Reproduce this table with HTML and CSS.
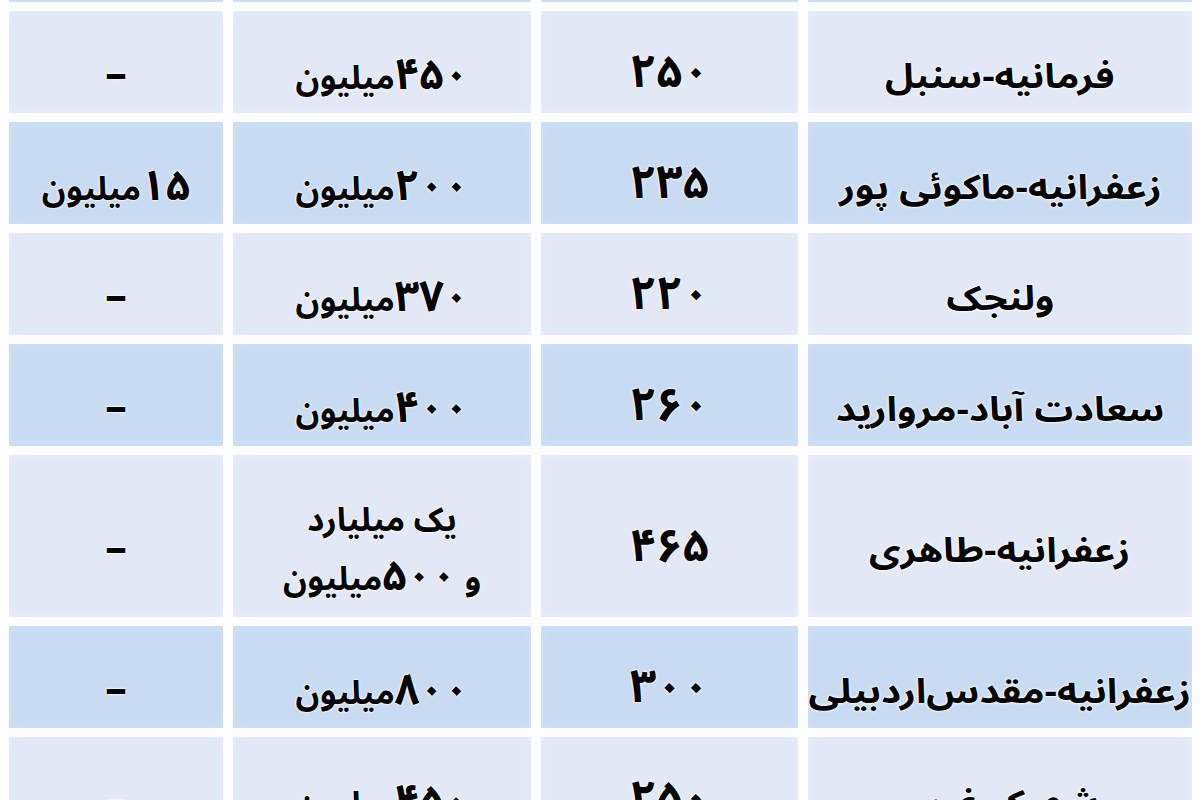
FILE: index.html
```html
<!DOCTYPE html>
<html lang="fa" dir="rtl">
<head>
<meta charset="utf-8">
<title>جدول قیمت</title>
<link rel="stylesheet" href="styles.css">
</head>
<body>
<div class="table">
  <div class="cell dark"></div><div class="cell dark"></div><div class="cell dark"></div><div class="cell dark"></div>

  <div class="cell light name"><span class="t">فرمانیه-سنبل</span></div>
  <div class="cell light num">۲۵۰</div>
  <div class="cell light"><span><span class="d">۴۵۰</span>میلیون</span></div>
  <div class="cell light dash">–</div>

  <div class="cell dark name"><span class="t">زعفرانیه-ماکوئی پور</span></div>
  <div class="cell dark num">۲۳۵</div>
  <div class="cell dark"><span><span class="d">۲۰۰</span>میلیون</span></div>
  <div class="cell dark"><span><span class="d">۱۵</span>میلیون</span></div>

  <div class="cell light name"><span class="t">ولنجک</span></div>
  <div class="cell light num">۲۲۰</div>
  <div class="cell light"><span><span class="d">۳۷۰</span>میلیون</span></div>
  <div class="cell light dash">–</div>

  <div class="cell dark name"><span class="t">سعادت آباد-مروارید</span></div>
  <div class="cell dark num">۲۶۰</div>
  <div class="cell dark"><span><span class="d">۴۰۰</span>میلیون</span></div>
  <div class="cell dark dash">–</div>

  <div class="cell light name"><span class="t">زعفرانیه-طاهری</span></div>
  <div class="cell light num">۴۶۵</div>
  <div class="cell light two">
    <div class="lines">
      <div class="line">یک میلیارد</div>
      <div class="line">و <span class="d">۵۰۰</span>میلیون</div>
    </div>
  </div>
  <div class="cell light dash">–</div>

  <div class="cell dark name"><span class="t">زعفرانیه-مقدس‌اردبیلی</span></div>
  <div class="cell dark num">۳۰۰</div>
  <div class="cell dark"><span><span class="d">۸۰۰</span>میلیون</span></div>
  <div class="cell dark dash">–</div>

  <div class="cell light name"><span class="t">شهرک غرب</span></div>
  <div class="cell light num">۲۵۰</div>
  <div class="cell light"><span><span class="d">۴۵۰</span>میلیون</span></div>
  <div class="cell light dash">–</div>
</div>
</body>
</html>
```

FILE: styles.css
```css
html, body {
  margin: 0;
  padding: 0;
  height: 800px;
  overflow: hidden;
  background: #fdfdff;
}

body {
  font-family: "Noto Sans Arabic", "DejaVu Sans", sans-serif;
  font-weight: bold;
  color: #050505;
}

.table {
  display: grid;
  direction: rtl;
  grid-template-columns: 384px 257px 298px 214px;
  grid-template-rows: repeat(5, 102px) 162px repeat(2, 102px);
  column-gap: 10px;
  row-gap: 9px;
  padding-right: 8px;
  margin-top: -100px;
}

.cell {
  display: flex;
  align-items: center;
  justify-content: center;
  text-align: center;
  font-size: 33px;
  line-height: 48px;
  padding-top: 30px;
  box-sizing: border-box;
  text-shadow: 0 0 3px #fff, 0 0 2px #fff, 0 0 1px #fff;
  white-space: nowrap;
  overflow: visible;
}

.name {
  font-size: 34px;
}

.name .t {
  display: inline-block;
  transform: scaleX(1.14);
}

.num {
  font-size: 46px;
  padding-top: 22px;
}

.d {
  font-size: 43px;
}

.dash {
  font-size: 44px;
  padding-top: 26px;
}

.light {
  background: #e2e8f6;
  box-shadow: inset 0 0 6px 2px #e6ecf8;
}

.dark {
  background: #c8dbf3;
  box-shadow: inset 0 0 6px 2px #cddff4;
}

.two {
  padding-top: 28px;
}

.lines {
  display: flex;
  flex-direction: column;
  align-items: center;
}

.line {
  line-height: 56px;
}
```
